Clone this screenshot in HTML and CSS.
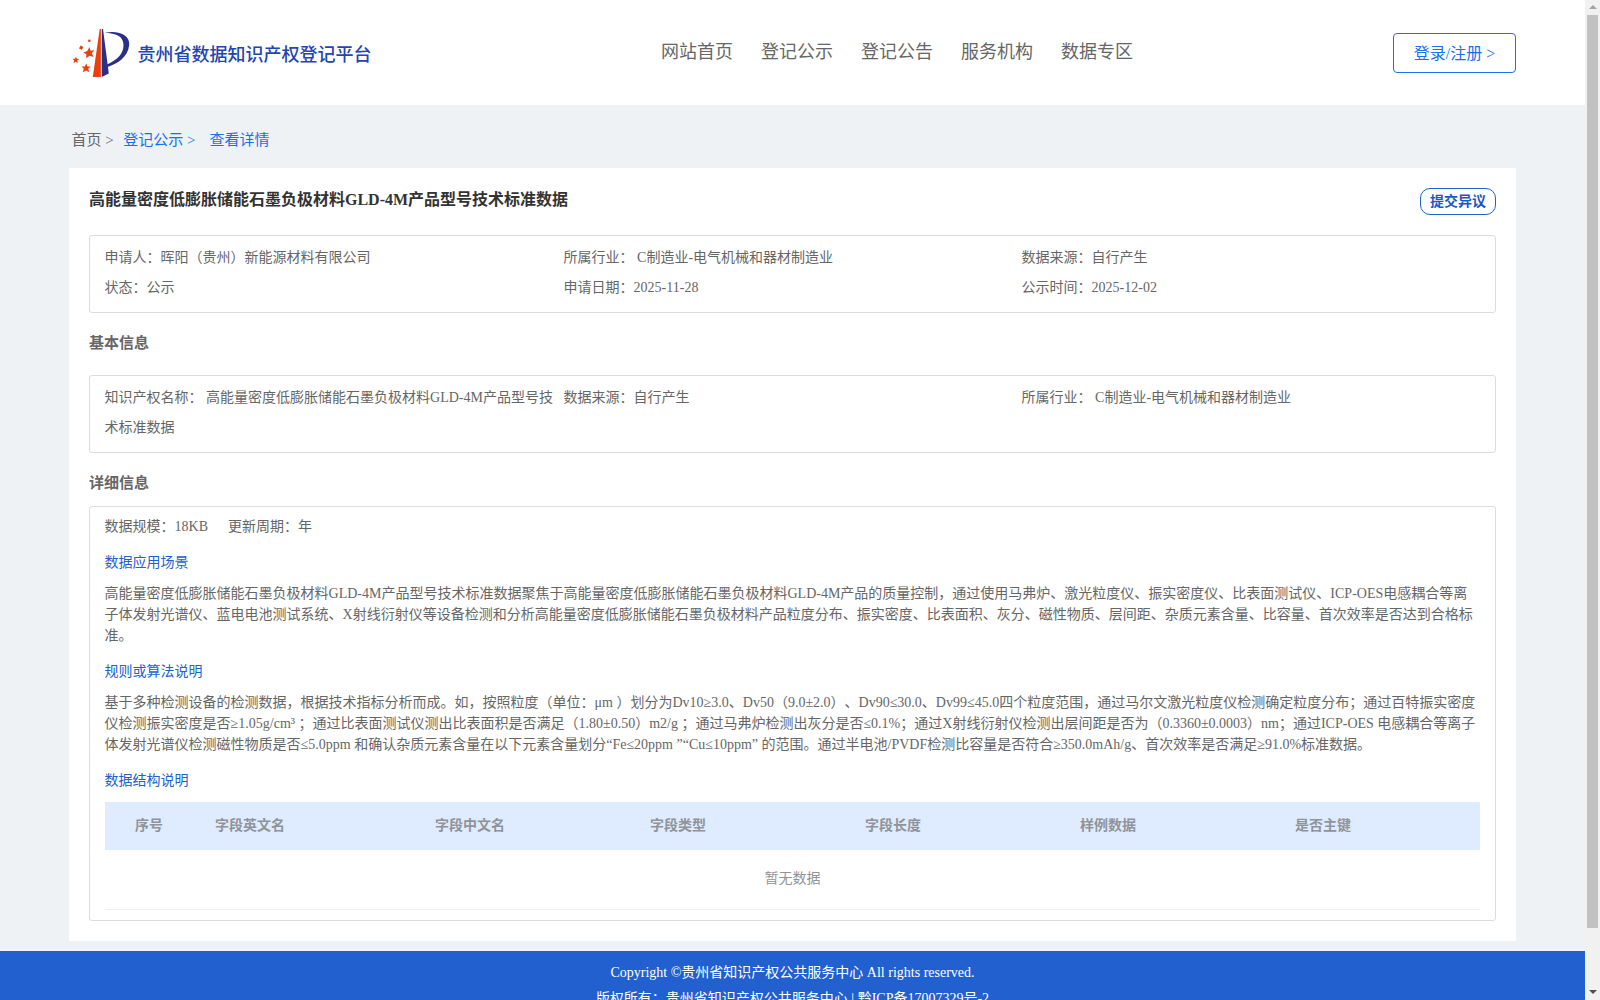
FILE: index.html
```html
<!DOCTYPE html>
<html lang="zh-CN">
<head>
<meta charset="utf-8">
<title>贵州省数据知识产权登记平台</title>
<link rel="stylesheet" href="styles.css">
</head>
<body>
<div class="page">
  <header class="header">
    <a class="brand">
      <svg class="logo" width="58" height="50" viewBox="0 0 58 50">
        <path fill="#e8400f" d="M27.700 0H28.900V48H20.800Z"/>
        <path fill="#2a3088" d="M29.800 0H31L36.800 44.500L29.800 48ZM32.500 3.700C47 1 58 6 57.200 16C56 28 46 34.500 35.500 38L35 35.500C45 31 51.500 25 51.500 16C51.500 7 44 4.300 32.500 3.700Z"/>
        <g fill="#e8400f">
          <path d="M17.500 18L18.600 21.700L22.300 21.200L19.800 24.200L21.600 28L17.600 26.800L14.300 29.300L14.300 25.300L11.300 23.600L15.300 22Z"/>
          <path d="M4 27.500L4.800 29.800L7.200 30L5.300 31.600L5.800 34L3.800 32.800L1.500 34.200L2.200 31.600L0.500 29.800L3 29.700Z"/>
          <path d="M14.300 34.500L15.400 37.600L18.800 37.600L16.200 39.800L17.300 43.200L14.200 41.500L10.800 43.200L11.800 39.800L9.500 37.600L12.800 37.400Z"/>
          <path d="M8.500 16.500L11.300 18L10 20.700L7 19.500Z"/>
          <circle cx="17.300" cy="11.800" r="1.300"/>
        </g>
      </svg>
      <span class="brand-name">贵州省数据知识产权登记平台</span>
    </a>
    <nav class="nav"><a>网站首页</a><a>登记公示</a><a>登记公告</a><a>服务机构</a><a>数据专区</a></nav>
    <a class="login">登录/注册 &gt;</a>
  </header>

  <div class="crumbs"><span>首页 &gt;</span><a>登记公示 &gt;</a><a class="current">查看详情</a></div>

  <main class="panel">
    <div class="title-row">
      <h1>高能量密度低膨胀储能石墨负极材料GLD-4M产品型号技术标准数据</h1>
      <a class="objection">提交异议</a>
    </div>
    <div class="box info">
      <div>申请人：晖阳（贵州）新能源材料有限公司</div>
      <div>所属行业： C制造业-电气机械和器材制造业</div>
      <div>数据来源：自行产生</div>
      <div>状态：公示</div>
      <div>申请日期：2025-11-28</div>
      <div>公示时间：2025-12-02</div>
    </div>
    <h2>基本信息</h2>
    <div class="box info">
      <div>知识产权名称： 高能量密度低膨胀储能石墨负极材料GLD-4M产品型号技术标准数据</div>
      <div>数据来源：自行产生</div>
      <div>所属行业： C制造业-电气机械和器材制造业</div>
    </div>
    <h2 class="detail-title">详细信息</h2>
    <div class="box detail">
      <div class="meta"><span>数据规模：18KB</span><span>更新周期：年</span></div>
      <h3>数据应用场景</h3>
      <p>高能量密度低膨胀储能石墨负极材料GLD-4M产品型号技术标准数据聚焦于高能量密度低膨胀储能石墨负极材料GLD-4M产品的质量控制，通过使用马弗炉、激光粒度仪、振实密度仪、比表面测试仪、ICP-OES电感耦合等离<br>子体发射光谱仪、蓝电电池测试系统、X射线衍射仪等设备检测和分析高能量密度低膨胀储能石墨负极材料产品粒度分布、振实密度、比表面积、灰分、磁性物质、层间距、杂质元素含量、比容量、首次效率是否达到合格标<br>准。</p>
      <h3>规则或算法说明</h3>
      <p>基于多种检测设备的检测数据，根据技术指标分析而成。如，按照粒度（单位：μm ）划分为Dv10≥3.0、Dv50（9.0±2.0）、Dv90≤30.0、Dv99≤45.0四个粒度范围，通过马尔文激光粒度仪检测确定粒度分布；通过百特振实密度<br>仪检测振实密度是否≥1.05g/cm³ ；通过比表面测试仪测出比表面积是否满足（1.80±0.50）m2/g ；通过马弗炉检测出灰分是否≤0.1%；通过X射线衍射仪检测出层间距是否为（0.3360±0.0003）nm；通过ICP-OES 电感耦合等离子<br>体发射光谱仪检测磁性物质是否≤5.0ppm 和确认杂质元素含量在以下元素含量划分“Fe≤20ppm ”“Cu≤10ppm” 的范围。通过半电池/PVDF检测比容量是否符合≥350.0mAh/g、首次效率是否满足≥91.0%标准数据。</p>
      <h3>数据结构说明</h3>
      <table>
        <thead><tr><th class="index">序号</th><th class="wide">字段英文名</th><th>字段中文名</th><th>字段类型</th><th>字段长度</th><th>样例数据</th><th class="last">是否主键</th></tr></thead>
        <tbody><tr><td colspan="7">暂无数据</td></tr></tbody>
      </table>
    </div>
  </main>

  <footer class="footer">
    <div>Copyright ©贵州省知识产权公共服务中心 All rights reserved.</div>
    <div>版权所有：贵州省知识产权公共服务中心 | 黔ICP备17007329号-2</div>
  </footer>
</div>
<div class="scrollbar"><i class="up"></i><i class="thumb"></i><i class="down"></i></div>
</body>
</html>
```
FILE: styles.css
```css
* { box-sizing: border-box; }
body {
  margin: 0;
  height: 1000px;
  overflow: hidden;
  display: flex;
  background: #eef2f5;
  color: #666;
  font-family: "Liberation Serif", "Noto Sans CJK SC", serif;
  font-size: 14px;
  text-spacing-trim: space-all;
}
h1, h2, h3, p { margin: 0; }
.page { width: 1585px; height: 1000px; overflow: hidden; }
.header { height: 105px; display: flex; background: #fff; padding: 0 69px 0 72px; white-space: nowrap; }
.brand { width: 589px; display: flex; padding-top: 28px; }
.logo { flex: none; margin-top: 1px; }
.brand-name { margin-left: 7.500px; line-height: 54px; font-size: 18px; font-weight: 500; color: #2344b4; }
.nav { flex: 1; display: flex; gap: 28px; line-height: 104px; font-size: 18px; }
.login {
  width: 123px; height: 40px; margin-top: 33px; border: 1px solid #1a6ff0; border-radius: 4px;
  color: #1a6ff0; font-size: 16px; line-height: 40px; text-align: center;
}
.crumbs { height: 63px; display: flex; padding: 7px 0 0 71.500px; line-height: 56px; font-size: 15px; }
.crumbs a { margin-left: 9.500px; color: #1a6ff0; }
.crumbs .current { margin-left: 14px; }
.panel { width: 1447px; height: 773px; margin-left: 69px; padding: 19px 20px 0; background: #fff; }
.title-row { height: 48px; display: flex; justify-content: space-between; }
h1 { line-height: 26px; font-size: 16px; color: #333; }
.objection {
  width: 76px; height: 27px; margin-top: 1px; border: 1px solid #2260d0; border-radius: 10px;
  color: #1c57c2; font-size: 14px; font-weight: bold; line-height: 25px; text-align: center;
}
.box { border: 1px solid #dcdcdc; border-radius: 3px; }
.info { height: 78px; display: grid; grid-template-columns: 459px 458px 1fr; padding: 7px 0 0 14.600px; grid-auto-rows: 30px; line-height: 30px; }
.info div { max-width: 450px; }
h2 { height: 62px; line-height: 61px; font-size: 15px; }
.detail-title { height: 53px; }
.detail { height: 415px; padding: 5px 14px 0 14.600px; white-space: nowrap; }
.meta { display: flex; gap: 20px; line-height: 30px; }
h3 { margin: 10px 0; height: 21px; line-height: 21px; font-size: 14px; font-weight: 400; color: #2260d0; }
p { height: 63px; line-height: 21px; }
p + h3 { margin-top: 15px; }
table { width: 1375px; margin: 11px 0 0 0.400px; border-collapse: separate; border-spacing: 0; table-layout: fixed; color: #909399; }
th { width: 215px; height: 48px; padding: 0 0 5px 10px; background: #dfecff; text-align: left; }
th.index { width: 100px; padding: 0 12px 5px 0; text-align: center; }
th.wide { width: 220px; }
th.last { width: 195px; }
td { height: 60px; padding: 0 0 5px; border-bottom: 1px solid #ebeef5; text-align: center; }
.footer { height: 90px; margin-top: 10px; padding-top: 9px; background: #2260d0; color: #fff; text-align: center; line-height: 26px; }
.scrollbar { width: 15px; height: 1000px; display: flex; flex-direction: column; align-items: center; background: #f1f1f1; }
.scrollbar i { flex: none; }
.thumb { width: 11px; height: 913px; margin-top: 6px; background: #c1c1c1; }
.up, .down { width: 0; height: 0; border: 4px solid transparent; }
.up { margin-top: 5px; border-top: 0; border-bottom-color: #a3a3a3; }
.down { margin-top: 62px; border-bottom: 0; border-top-color: #505050; }
```
